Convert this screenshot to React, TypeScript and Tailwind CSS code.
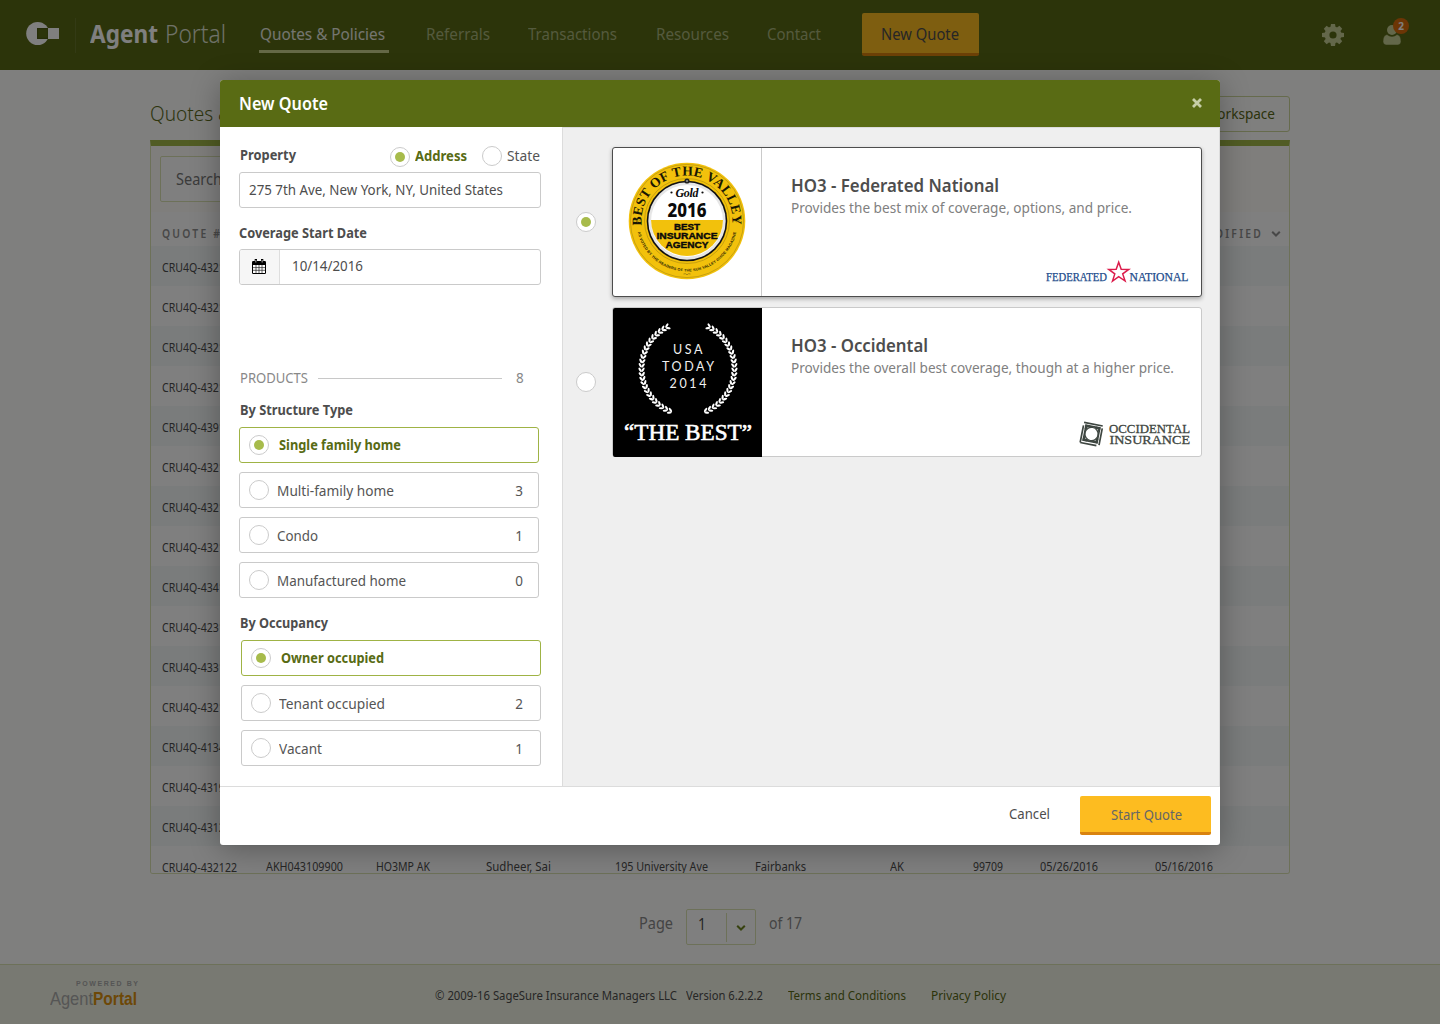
import React, { useLayoutEffect, useRef, useState } from "react";

/** Text fitted to the width of its box: tracked out when short, condensed when long. */
function T({ children, className = "" }: { children: string; className?: string }) {
  const box = useRef<HTMLSpanElement>(null);
  const inner = useRef<HTMLSpanElement>(null);
  const [fit, setFit] = useState<React.CSSProperties>({});
  useLayoutEffect(() => {
    if (!box.current || !inner.current) return;
    const target = box.current.getBoundingClientRect().width;
    const natural = inner.current.getBoundingClientRect().width;
    if (natural > target) setFit({ transform: `scaleX(${target / natural})` });
    else if (children.length > 1)
      setFit({ letterSpacing: `${(target - natural) / (children.length - 1)}px` });
  }, [children]);
  return (
    <span ref={box} className={`block shrink-0 whitespace-nowrap leading-5 ${className}`}>
      <span ref={inner} className="inline-block origin-left" style={fit}>
        {children}
      </span>
    </span>
  );
}

function Radio({ on = false, className = "" }: { on?: boolean; className?: string }) {
  return (
    <span
      className={`flex size-5 shrink-0 items-center justify-center rounded-full border border-[#cbcbcb] bg-white ${className}`}
    >
      {on && <span className="size-2.5 rounded-full bg-[#a7bb4b]" />}
    </span>
  );
}

function Chevron({ className = "" }: { className?: string }) {
  return (
    <svg viewBox="0 0 10 8" className={`h-2 w-2.5 shrink-0 ${className}`} fill="none" stroke="currentColor" strokeWidth="2">
      <path d="M1.2 1.7 5 5.5 8.8 1.7" />
    </svg>
  );
}

function Gear() {
  return (
    <svg viewBox="-11 -11 22 22" className="size-[22px]" fill="currentColor">
      <path
        fillRule="evenodd"
        d="M0-8.4A8.4 8.4 0 1 1 0 8.4 8.4 8.4 0 1 1 0-8.4M0-3.6A3.6 3.6 0 1 0 0 3.6 3.6 3.6 0 1 0 0-3.6"
      />
      {[0, 45, 90, 135, 180, 225, 270, 315].map((a) => (
        <path key={a} transform={`rotate(${a})`} d="M-2.6-7.4-2-11H2L2.6-7.4Z" />
      ))}
    </svg>
  );
}

function Header() {
  return (
    <header className="flex h-[70px] items-start bg-[#586815]">
      <svg viewBox="0 0 34 24" className="ml-[26px] mt-[22px] h-6 w-[34px] shrink-0">
        <circle cx="11.7" cy="11.5" r="11.5" fill="#fff" />
        <path d="M11 6H22V17H11Z" fill="#4a5910" />
        <path d="M12.2 7.2H21.5V15.8H12.2Z" fill="#586815" />
        <path d="M22 6H33V17H22Z" fill="#fff" />
      </svg>
      <div className="ml-[15px] mt-[18px] h-[35px] w-px bg-[#66752b]" />
      <T className="ml-[14px] mt-[23px] w-[68px] text-[25px] font-bold text-white">Agent</T>
      <T className="ml-[7px] mt-[23px] w-[61px] text-[26px] font-light text-[#dfe2d0]">Portal</T>
      <div className="ml-[33px] mt-[24px] w-[130px] border-b-[3px] border-[#c9d18d] pb-[6px] pl-px">
        <T className="w-[125px] text-[15.5px] text-[#e9ebe0]">Quotes &amp; Policies</T>
      </div>
      <nav className="mt-[24px] flex text-[15.5px] text-[#a9b47b]">
        <T className="ml-[37px] w-[64px]">Referrals</T>
        <T className="ml-[38px] w-[89px]">Transactions</T>
        <T className="ml-[39px] w-[73px]">Resources</T>
        <T className="ml-[38px] w-[54px]">Contact</T>
      </nav>
      <div className="ml-[41px] mt-[13px] flex h-[43px] w-[117px] rounded-[2px] border-b-[3px] border-[#d9830f] bg-[#fdbc20] pl-[19px] pt-[11px]">
        <T className="w-[78px] text-[15.5px] text-[#4d4d4d]">New Quote</T>
      </div>
      <div className="ml-[343px] mt-6 text-[#c6ce95]">
        <Gear />
      </div>
      <div className="relative ml-[39px] mt-[25px] text-[#c6ce95]">
        <svg viewBox="0 0 18 20" className="h-5 w-[18px]" fill="currentColor">
          <circle cx="9" cy="5" r="5" />
          <path
            d="M4 9.500C1.200 10 0 12.500 0 16.500 0 18.800 1.500 20 3.500 20H14.500C16.500 20 18 18.800 18 16.500 18 12.500 16.800 10 14 9.500 11 12 7 12 4 9.500Z"
            stroke="#586815"
            strokeWidth=".5"
          />
        </svg>
        <span className="absolute -top-[7px] left-[10px] flex size-4 items-center justify-center rounded-full bg-[#d96b0b] text-[10px] font-bold text-white">
          2
        </span>
      </div>
    </header>
  );
}

const quoteIds = [
  "CRU4Q-432118", "CRU4Q-432117", "CRU4Q-432115", "CRU4Q-432116", "CRU4Q-439120", "CRU4Q-432112",
  "CRU4Q-432110", "CRU4Q-432109", "CRU4Q-434108", "CRU4Q-423107", "CRU4Q-433106", "CRU4Q-432105",
  "CRU4Q-413410", "CRU4Q-431910", "CRU4Q-431210",
];

function Workspace() {
  return (
    <main className="mx-auto w-[1140px]">
      <div className="flex h-[70px] items-start justify-between">
        <T className="mt-[34px] w-[151px] text-[19.5px] font-light text-[#5c6b1c]">Quotes &amp; Policies</T>
        <div className="mt-[26px] flex h-9 w-[130px] justify-end rounded-[3px] border border-[#ccd69a] pr-[14px] pt-[7px]">
          <T className="w-[70px] text-[14px] text-[#586815]">Workspace</T>
        </div>
      </div>
      <section className="h-[734px] overflow-hidden rounded-b-[3px] border border-t-[6px] border-[#dbe3b3] border-t-[#a3b849] bg-[#fffdf8]">
        <div className="px-[9px] pt-[10px]">
          <div className="h-[46px] w-[500px] rounded-[2px] border border-[#dbe3b3] bg-white pl-[15px] pt-3">
            <T className="w-[46px] text-[15.5px] text-[#777]">Search</T>
          </div>
        </div>
        <div className="mt-[10px] flex h-[34px] items-center justify-between bg-white pl-[11px] pr-2 text-[12px] font-semibold tracking-[2.6px] text-[#909090]">
          <span className="origin-left scale-x-[.86] pt-[9px]">QUOTE #</span>
          <span className="flex items-center gap-2 pt-[9px]">
            <span className="origin-right scale-x-[.86]">MODIFIED</span>
            <Chevron />
          </span>
        </div>
        {quoteIds.map((id, i) => (
          <div key={i} className={`flex h-10 pl-[11px] pt-[12px] ${i % 2 ? "bg-white" : "bg-[#f4f9f9]"}`}>
            <T className="w-[75px] text-[12px] text-[#4d4d4d]">{id}</T>
          </div>
        ))}
        <div className="flex h-10 bg-white pl-[11px] pt-[11px] text-[12px] text-[#4d4d4d]">
          <T className="mt-px w-[75px]">CRU4Q-432122</T>
          <T className="ml-[29px] w-[77px]">AKH043109900</T>
          <T className="ml-[33px] w-[54px]">HO3MP AK</T>
          <T className="ml-[56px] w-[65px]">Sudheer, Sai</T>
          <T className="ml-[64px] w-[93px]">195 University Ave</T>
          <T className="ml-[47px] w-[51px]">Fairbanks</T>
          <T className="ml-[84px] w-[14px]">AK</T>
          <T className="ml-[69px] w-[30px]">99709</T>
          <T className="ml-[37px] w-[58px]">05/26/2016</T>
          <T className="ml-[57px] w-[58px]">05/16/2016</T>
        </div>
      </section>
      <div className="flex h-[90px] pl-[489px] pt-[35px] text-[15.5px] text-[#888]">
        <T className="mt-1 w-[34px]">Page</T>
        <div className="ml-[13px] flex h-9 w-[70px] rounded-[2px] border border-[#dbe3b3] bg-white">
          <T className="ml-[11px] mt-1 w-[8px] text-[#4d4d4d]">1</T>
          <div className="ml-5 mt-[3px] h-[29px] w-px bg-[#dbe3b3]" />
          <Chevron className="ml-[9px] mt-[14px] text-[#6f8420]" />
        </div>
        <T className="ml-[13px] mt-1 w-[33px]">of 17</T>
      </div>
    </main>
  );
}

function Footer() {
  return (
    <footer className="flex h-[60px] items-start border-t border-[#dbe3b3] bg-[#f1f3e4] text-[12px]">
      <div className="ml-[50px] mt-[13px] w-[88px] font-['Liberation_Sans',sans-serif]">
        <T className="ml-[26px] w-[62px] text-[7px] font-bold !leading-3 text-[#aaa]">POWERED BY</T>
        <div className="-mt-px flex text-[18.5px]">
          <T className="w-[43px] text-[#aaa]">Agent</T>
          <T className="w-[44px] font-bold text-[#db900f]">Portal</T>
        </div>
      </div>
      <T className="ml-[297px] mt-[21px] w-[242px] text-[#4d4d4d]">© 2009-16 SageSure Insurance Managers LLC</T>
      <T className="ml-[9px] mt-[21px] w-[77px] text-[#4d4d4d]">Version 6.2.2.2</T>
      <T className="ml-[25px] mt-[21px] w-[118px] text-[#586815]">Terms and Conditions</T>
      <T className="ml-[25px] mt-[21px] w-[75px] text-[#586815]">Privacy Policy</T>
    </footer>
  );
}

type OptionProps = { label: string; labelClass: string; count?: string; countClass?: string; on?: boolean };

function Option({ label, labelClass, count, countClass = "mr-[15px]", on = false }: OptionProps) {
  return (
    <div
      className={`flex h-9 w-[300px] items-start rounded-[3px] border bg-white pt-[7px] ${on ? "border-[#9fb345]" : "border-[#cacaca]"}`}
    >
      <Radio on={on} className="ml-[9px]" />
      {on ? (
        <T className={`ml-[10px] text-[14px] font-bold text-[#586b14] ${labelClass}`}>{label}</T>
      ) : (
        <T className={`ml-2 mt-px text-[14px] text-[#555] ${labelClass}`}>{label}</T>
      )}
      {count && <span className={`ml-auto mt-px text-[13.5px] leading-5 text-[#555] ${countClass}`}>{count}</span>}
    </div>
  );
}

function CalendarIcon() {
  return (
    <svg viewBox="0 0 14 15" className="h-[15px] w-[14px]">
      <path d="M0 3.200Q0 2 1.200 2H12.800Q14 2 14 3.200V13.800Q14 15 12.800 15H1.200Q0 15 0 13.800Z" fill="#000" />
      <path d="M1 6H13V14H1Z" fill="#fff" />
      <path d="M4 6V14M7 6V14M10 6V14M1 8.600H13M1 11.300H13" stroke="#222" strokeWidth=".7" />
      <path d="M2.700 0H5V4.300H2.700ZM9 0H11.300V4.300H9Z" fill="#000" />
      <path d="M3.850 1V3.500M10.150 1V3.500" stroke="#fff" strokeWidth=".7" />
    </svg>
  );
}

function FormColumn() {
  return (
    <div className="w-[343px] shrink-0 border-r border-[#dcdcdc] pl-[19px]">
      <div className="flex h-[45px] pl-px pt-[18px] text-[14px]">
        <T className="w-[56px] font-bold text-[#4d4d4d]">Property</T>
        <Radio on className="ml-[94px] mt-0.5" />
        <T className="ml-[5px] mt-px w-[52px] font-bold text-[#586b14]">Address</T>
        <Radio className="ml-[15px] mt-px" />
        <T className="ml-[5px] mt-px w-[33px] text-[#555]">State</T>
      </div>
      <div className="h-9 w-[302px] rounded-[3px] border border-[#cacaca] pl-[9px] pt-[7px]">
        <T className="w-[254px] text-[14px] text-[#4d4d4d]">275 7th Ave, New York, NY, United States</T>
      </div>
      <T className="mt-[15px] w-[128px] text-[14px] font-bold text-[#4d4d4d]">Coverage Start Date</T>
      <div className="mt-[6px] flex h-9 w-[302px] overflow-hidden rounded-[3px] border border-[#cacaca]">
        <div className="flex w-10 items-start border-r border-[#dedede] bg-[#f6f6f6] pl-3 pt-[9px]">
          <CalendarIcon />
        </div>
        <T className="ml-3 mt-[6px] w-[71px] text-[14px] text-[#4d4d4d]">10/14/2016</T>
      </div>
      <div className="mt-[83px] flex h-5 items-start pl-px text-[13.5px] text-[#888]">
        <T className="w-[68px]">PRODUCTS</T>
        <div className="ml-[10px] mt-[10px] h-px w-[184px] bg-[#c8c8c8]" />
        <span className="ml-[14px] leading-5">8</span>
      </div>
      <T className="mb-[7px] ml-px mt-3 w-[113px] text-[14px] font-bold text-[#4d4d4d]">By Structure Type</T>
      <div className="flex flex-col gap-[9px]">
        <Option on label="Single family home" labelClass="w-[122px]" />
        <Option label="Multi-family home" labelClass="w-[117px]" count="3" />
        <Option label="Condo" labelClass="w-[41px]" count="1" />
        <Option label="Manufactured home" labelClass="w-[129px]" count="0" />
      </div>
      <T className="mb-[7px] ml-px mt-[15px] w-[88px] text-[14px] font-bold text-[#4d4d4d]">By Occupancy</T>
      <div className="ml-[2px] flex flex-col gap-[9px]">
        <Option on label="Owner occupied" labelClass="w-[103px]" />
        <Option label="Tenant occupied" labelClass="w-[106px]" count="2" countClass="mr-[17px]" />
        <Option label="Vacant" labelClass="w-[43px]" count="1" countClass="mr-[17px]" />
      </div>
    </div>
  );
}

function GoldBadge() {
  return (
    <svg viewBox="-60 -60 120 120" className="size-[120px]">
      <defs>
        <path id="arc-top" d="M-45.100 6A45.500 45.500 0 1 1 45.100 6" />
        <path id="arc-bottom" d="M-49.500 10A50.500 50.500 0 0 0 49.500 10" />
      </defs>
      <circle r="58.300" fill="#f2c10c" />
      <circle r="56.600" fill="none" stroke="#a98a10" strokeWidth=".6" />
      <circle r="42.500" fill="none" stroke="#a98a10" strokeWidth=".6" />
      <circle r="40.300" fill="#111" />
      <circle r="38.700" fill="#e6e6e6" />
      <circle r="36" fill="#fff" />
      <path d="M-36-1H36A36 36 0 0 1-36-1Z" fill="#f2c10c" />
      <circle cy="-40" r="2.600" fill="#222" />
      <circle cy="-40" r="1" fill="#999" />
      <text fontFamily="Liberation Serif, serif" fontWeight="700" fontSize="13.600" fill="#1a1703">
        <textPath href="#arc-top" startOffset="1.500" textLength="151" lengthAdjust="spacing">BEST OF THE VALLEY</textPath>
      </text>
      <text fontFamily="Liberation Sans, sans-serif" fontWeight="700" fontSize="3.800" fill="#2a2404">
        <textPath href="#arc-bottom" startOffset="1" textLength="136" lengthAdjust="spacing">AS VOTED BY THE READERS OF THE SUN VALLEY GUIDE MAGAZINE</textPath>
      </text>
      <path d="M-53 0q2-1 3.500 .8 1.500-1.800 3.500-.8M46 0q2-1 3.500 .8 1.500-1.800 3.500-.8M-3.500 53q2-1 3.500 .8 1.500-1.800 3.500-.8" fill="none" stroke="#967a10" strokeWidth=".8" />
      <g textAnchor="middle" fill="#0a0a0a">
        <text y="-24.500" fontFamily="Liberation Serif, serif" fontStyle="italic" fontWeight="700" fontSize="12" textLength="23">Gold</text>
        <circle cx="-15.500" cy="-28.500" r="1.100" />
        <circle cx="15.500" cy="-28.500" r="1.100" />
        <text y="-4.500" fontFamily="Noto Sans, sans-serif" fontWeight="800" fontSize="19" textLength="39" lengthAdjust="spacingAndGlyphs">2016</text>
        <g fontFamily="Liberation Sans, sans-serif" fontWeight="700" fontSize="9" stroke="#0a0a0a" strokeWidth=".4">
          <text y="8.800" textLength="26" lengthAdjust="spacingAndGlyphs">BEST</text>
          <text y="18" textLength="61" lengthAdjust="spacingAndGlyphs">INSURANCE</text>
          <text y="27.200" textLength="43" lengthAdjust="spacingAndGlyphs">AGENCY</text>
        </g>
      </g>
    </svg>
  );
}

const leafAngles = Array.from({ length: 25 }, (_, i) => 113 + i * 5.45);

function LaurelHalf() {
  return (
    <g fill="#fff">
      {leafAngles.map((a) => (
        <g key={a} transform={`rotate(${a}) translate(46.500 0)`}>
          <ellipse rx="1.100" ry="2.500" transform="translate(1.400 0) rotate(-32)" />
          <ellipse rx="1.100" ry="2.500" transform="translate(-1.500 0) rotate(32)" />
        </g>
      ))}
    </g>
  );
}

function BestBadge() {
  return (
    <svg viewBox="0 0 149 149" className="h-[149px] w-[149px] shrink-0 rounded-l-[2px]">
      <path d="M0 0H149V149H0Z" fill="#000" />
      <g transform="translate(75 60.500)">
        <LaurelHalf />
        <g transform="scale(-1 1)">
          <LaurelHalf />
        </g>
      </g>
      <g fill="#f0f0f0" fontFamily="Lato, sans-serif" fontSize="12.500" fontWeight="400">
        <text x="60" y="46" textLength="29.500">USA</text>
        <text x="49" y="62.700" textLength="52">TODAY</text>
        <text x="56.500" y="79.500" textLength="37">2014</text>
      </g>
      <text x="11" y="132" fill="#fff" fontFamily="Liberation Serif, serif" fontSize="23.500" stroke="#fff" strokeWidth=".6" textLength="128" lengthAdjust="spacingAndGlyphs">
        “THE BEST”
      </text>
    </svg>
  );
}

function FederatedLogo() {
  return (
    <svg viewBox="0 0 144 24" className="h-6 w-[144px]">
      <g fill="#1d4c8c" stroke="#1d4c8c" strokeWidth=".25" fontFamily="Liberation Serif, serif" fontSize="11.500">
        <text x="1" y="21" textLength="61" lengthAdjust="spacingAndGlyphs">FEDERATED</text>
        <text x="84.500" y="21" textLength="59" lengthAdjust="spacingAndGlyphs">NATIONAL</text>
      </g>
      <path
        d="M73.700 2.200 76.200 9.200 83.800 9.400 77.700 13.900 80.100 21 73.700 16.700 67.500 21 69.800 13.900 63.700 9.400 71.200 9.200Z"
        fill="#fff"
        stroke="#dc1c4b"
        strokeWidth="1.500"
      />
    </svg>
  );
}

function OccidentalLogo() {
  return (
    <svg viewBox="0 0 114 26" className="h-[26px] w-[114px]">
      <g fill="none" stroke="#3e4641" strokeWidth="1.700" transform="translate(1.500 0) rotate(11 12 13)">
        <path d="M2.500 3H21.500M21.500 5.500V22.500M19 23.500H2.500M2.500 6V23.500" />
        <path d="M5 5.500H19V20.500H5Z" />
        <circle cx="12" cy="13" r="6.600" strokeWidth="1.200" />
        <path d="M5.500 9.500V6H9M15 6H18.500V9.500M18.500 16.500V20H15M9 20H5.500V16.500" strokeWidth="2.400" />
      </g>
      <g fill="#3e4641" stroke="#3e4641" strokeWidth=".3" fontFamily="Liberation Serif, serif" fontSize="13">
        <text x="31" y="12" textLength="81" lengthAdjust="spacingAndGlyphs">OCCIDENTAL</text>
        <text x="31.500" y="23.200" textLength="80.500" lengthAdjust="spacingAndGlyphs">INSURANCE</text>
      </g>
    </svg>
  );
}

function QuoteList() {
  return (
    <div className="flex grow flex-col gap-[10px] border-r border-t border-[#dcdcdc] bg-[#efefef] pl-[13px] pt-[19px]">
      <div className="flex items-center">
        <Radio on />
        <div className="ml-4 flex h-[150px] w-[590px] rounded-[3px] border border-[#4d4d4d] bg-white shadow-[0_2px_4px_rgba(0,0,0,0.3)]">
          <div className="flex w-[149px] justify-center border-r border-[#cacaca] pt-[13px]">
            <GoldBadge />
          </div>
          <div className="flex grow flex-col pl-[29px] pr-3 pt-[27px]">
            <T className="w-[208px] text-[17.5px] font-semibold text-[#4d4d4d]">HO3 - Federated National</T>
            <T className="mt-[3px] w-[341px] text-[14px] text-[#808080]">
              Provides the best mix of coverage, options, and price.
            </T>
            <div className="mt-[42px] flex justify-end">
              <FederatedLogo />
            </div>
          </div>
        </div>
      </div>
      <div className="flex items-center">
        <Radio />
        <div className="ml-4 flex h-[150px] w-[590px] rounded-[3px] border border-[#cacaca] bg-white">
          <BestBadge />
          <div className="flex grow flex-col pl-[29px] pr-[9px] pt-[27px]">
            <T className="w-[137px] text-[17.5px] font-semibold text-[#4d4d4d]">HO3 - Occidental</T>
            <T className="mt-[3px] w-[383px] text-[14px] text-[#808080]">
              Provides the overall best coverage, though at a higher price.
            </T>
            <div className="mt-[43px] flex justify-end">
              <OccidentalLogo />
            </div>
          </div>
        </div>
      </div>
    </div>
  );
}

function Modal() {
  return (
    <div className="flex h-[765px] w-[1000px] flex-col overflow-hidden rounded-[3px] bg-white shadow-[0_4px_30px_rgba(0,0,0,0.3)]">
      <div className="flex h-[47px] shrink-0 items-start justify-between bg-[#596b14] pl-[19px] pr-[18px]">
        <T className="mt-[13px] w-[89px] text-[17.5px] font-semibold text-white">New Quote</T>
        <svg viewBox="0 0 10 10" className="mt-[18px] size-[10px]" stroke="#c6cea6" strokeWidth="2.800">
          <path d="M1 1 9 9M9 1 1 9" />
        </svg>
      </div>
      <div className="flex h-[659px] shrink-0">
        <FormColumn />
        <QuoteList />
      </div>
      <div className="flex grow items-start justify-end border-t border-[#dcdcdc] pr-[9px] text-[14px]">
        <T className="mr-[30px] mt-[17px] w-[41px] text-[#4d4d4d]">Cancel</T>
        <div className="mt-[9px] flex h-[39px] w-[131px] rounded-[2px] border-b-[3px] border-[#d9830f] bg-[#fdbc20] pl-[31px] pt-[9px]">
          <T className="w-[71px] text-[#666]">Start Quote</T>
        </div>
      </div>
    </div>
  );
}

export default function App() {
  return (
    <div className="relative h-[1024px] w-[1440px] overflow-hidden bg-[#fffefc] font-['Noto_Sans',sans-serif]">
      <Header />
      <Workspace />
      <Footer />
      <div className="absolute inset-0 flex items-start justify-center bg-black/50 pt-20">
        <Modal />
      </div>
    </div>
  );
}
